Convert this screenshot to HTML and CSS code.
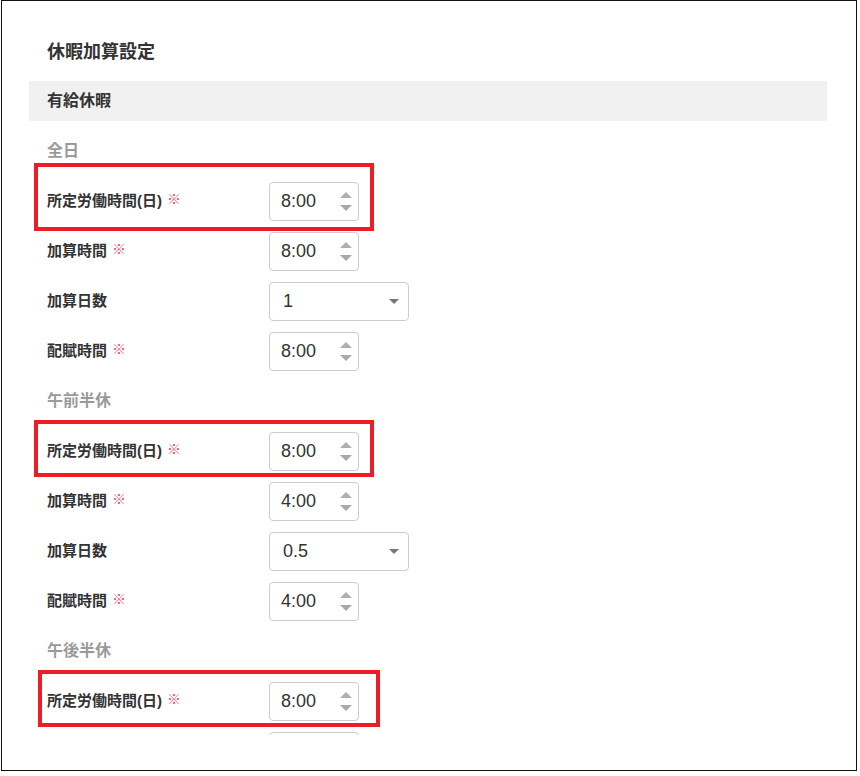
FILE: index.html
```html
<!DOCTYPE html>
<html lang="ja">
<head>
    <meta charset="UTF-8">
    <title>休暇加算設定</title>
    <link rel="stylesheet" href="styles.css">
</head>
<body>
    <div class="frame">
        <div class="scroll">
            <h1 class="page-title">休暇加算設定</h1>
            <div class="panel">有給休暇</div>

            <div class="group group-first">
                <div class="group-title">全日</div>
                <div class="row">
                    <label class="label">所定労働時間(日)<span class="req">※</span></label>
                    <div class="num"><span>8:00</span><span class="spin"><i class="up"></i><i class="down"></i></span></div>
                </div>
                <div class="row">
                    <label class="label">加算時間<span class="req">※</span></label>
                    <div class="num"><span>8:00</span><span class="spin"><i class="up"></i><i class="down"></i></span></div>
                </div>
                <div class="row">
                    <label class="label">加算日数</label>
                    <div class="select"><span>1</span><i class="caret"></i></div>
                </div>
                <div class="row">
                    <label class="label">配賦時間<span class="req">※</span></label>
                    <div class="num"><span>8:00</span><span class="spin"><i class="up"></i><i class="down"></i></span></div>
                </div>
            </div>

            <div class="group">
                <div class="group-title">午前半休</div>
                <div class="row">
                    <label class="label">所定労働時間(日)<span class="req">※</span></label>
                    <div class="num"><span>8:00</span><span class="spin"><i class="up"></i><i class="down"></i></span></div>
                </div>
                <div class="row">
                    <label class="label">加算時間<span class="req">※</span></label>
                    <div class="num"><span>4:00</span><span class="spin"><i class="up"></i><i class="down"></i></span></div>
                </div>
                <div class="row">
                    <label class="label">加算日数</label>
                    <div class="select"><span>0.5</span><i class="caret"></i></div>
                </div>
                <div class="row">
                    <label class="label">配賦時間<span class="req">※</span></label>
                    <div class="num"><span>4:00</span><span class="spin"><i class="up"></i><i class="down"></i></span></div>
                </div>
            </div>

            <div class="group">
                <div class="group-title">午後半休</div>
                <div class="row">
                    <label class="label">所定労働時間(日)<span class="req">※</span></label>
                    <div class="num"><span>8:00</span><span class="spin"><i class="up"></i><i class="down"></i></span></div>
                </div>
                <!-- next row is scrolled out of view, only its box edge shows -->
                <div class="row">
                    <label class="label"></label>
                    <div class="num"></div>
                </div>
            </div>
        </div>

        <!-- annotation boxes -->
        <div class="mark mark-1"></div>
        <div class="mark mark-2"></div>
        <div class="mark mark-3"></div>
    </div>
</body>
</html>
```

FILE: styles.css
```css
body {
    margin: 0;
    background: #fff;
    font-family: "Liberation Sans", "Noto Sans CJK JP", sans-serif;
    color: #333;
}

.frame {
    position: relative;
    box-sizing: border-box;
    width: 856px;
    height: 771px;
    margin-left: 1px;
    border: 1px solid #111;
}

.scroll {
    height: 734px;
    overflow: hidden;
    padding: 0 29px 0 27px;
}

.page-title {
    margin: 0;
    padding: 39px 18px 17px;
    font-size: 18px;
    line-height: 24px;
    font-weight: bold;
}

.panel {
    height: 40px;
    line-height: 40px;
    padding: 0 18px;
    background: #f1f1f1;
    font-size: 16px;
    font-weight: bold;
}

.group-first {
    margin-top: 5px;
}

.group-title {
    height: 50px;
    line-height: 50px;
    padding: 0 18px;
    font-size: 16px;
    font-weight: bold;
    color: #9a9a9a;
}

.row {
    display: flex;
    align-items: center;
    height: 50px;
    padding-left: 18px;
}

.label {
    width: 222px;
    padding-bottom: 4px;
    font-size: 15px;
    font-weight: bold;
}

.req {
    margin-left: 5px;
    font-size: 14px;
    font-weight: normal;
    color: #e94b6a;
    vertical-align: 2px;
}

.num,
.select {
    box-sizing: border-box;
    display: flex;
    align-items: center;
    justify-content: space-between;
    height: 39px;
    border: 1px solid #ccc;
    border-radius: 4px;
    font-size: 18px;
    color: #333;
}

.num {
    width: 90px;
    padding: 0 6px 0 11px;
}

.select {
    width: 140px;
    padding: 0 9px 0 13px;
}

.spin {
    display: flex;
    flex-direction: column;
    gap: 7px;
}

.spin i {
    width: 0;
    height: 0;
    border-left: 6px solid transparent;
    border-right: 6px solid transparent;
}

.spin .up {
    border-bottom: 6px solid #b0b0b0;
}

.spin .down {
    border-top: 6px solid #a8a8a8;
}

.caret {
    width: 0;
    height: 0;
    border-left: 5px solid transparent;
    border-right: 5px solid transparent;
    border-top: 5px solid #777;
}

.mark {
    position: absolute;
    box-sizing: border-box;
    border: 4px solid #ee1c25;
}

.mark-1 {
    left: 32px;
    top: 162px;
    width: 340px;
    height: 68px;
}

.mark-2 {
    left: 32px;
    top: 419px;
    width: 340px;
    height: 57px;
}

.mark-3 {
    left: 36px;
    top: 669px;
    width: 342px;
    height: 57px;
}
```
